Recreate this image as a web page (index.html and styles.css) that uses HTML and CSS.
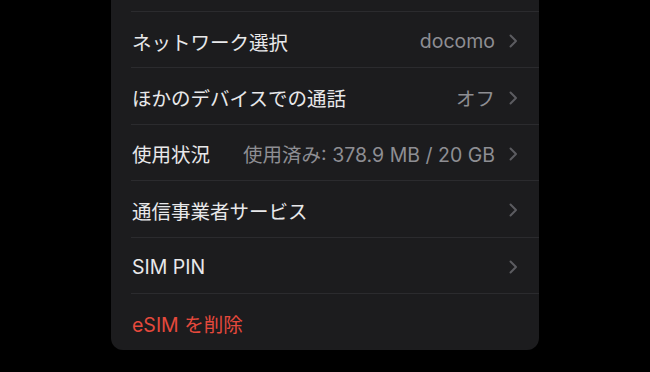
FILE: index.html
```html
<!DOCTYPE html>
<html lang="ja">
<head>
  <meta charset="UTF-8">
  <title>モバイル通信</title>
  <link rel="stylesheet" href="styles.css">
</head>
<body>
  <div class="card">
    <div class="row cut"></div>

    <div class="row">
      <span class="label">ネットワーク選択</span>
      <span class="value">docomo</span>
      <svg class="chev" viewBox="0 0 9 14"><polyline points="1.5,1.5 7,7 1.5,12.5"/></svg>
    </div>

    <div class="row">
      <span class="label">ほかのデバイスでの通話</span>
      <span class="value">オフ</span>
      <svg class="chev" viewBox="0 0 9 14"><polyline points="1.5,1.5 7,7 1.5,12.5"/></svg>
    </div>

    <div class="row">
      <span class="label">使用状況</span>
      <span class="value">使用済み: 378.9 MB / 20 GB</span>
      <svg class="chev" viewBox="0 0 9 14"><polyline points="1.5,1.5 7,7 1.5,12.5"/></svg>
    </div>

    <div class="row">
      <span class="label">通信事業者サービス</span>
      <svg class="chev" viewBox="0 0 9 14"><polyline points="1.5,1.5 7,7 1.5,12.5"/></svg>
    </div>

    <div class="row">
      <span class="label">SIM PIN</span>
      <svg class="chev" viewBox="0 0 9 14"><polyline points="1.5,1.5 7,7 1.5,12.5"/></svg>
    </div>

    <div class="row last">
      <span class="label danger">eSIM を削除</span>
    </div>
  </div>
</body>
</html>
```

FILE: styles.css
```css
html, body {
  margin: 0;
  background: #000;
  height: 100%;
  overflow: hidden;
}
body {
  font-family: Inter, "Noto Sans CJK JP", sans-serif;
  font-size: 19.5px;
  color: #e8e8ea;
}
.card {
  width: 428px;
  margin: -45px auto 0;
  background: #1c1c1e;
  border-radius: 0 0 12px 12px;
}
.row {
  position: relative;
  height: 56.4px;
  box-sizing: border-box;
  display: flex;
  align-items: center;
  padding: 2px 21px 0 21px;
}
.row::after {
  content: "";
  position: absolute;
  left: 20px;
  right: 0;
  bottom: 0;
  height: 1px;
  background: #2b2b2e;
}
.row.cut {
  height: 57px;
}
.row.last::after {
  display: none;
}
.label {
  flex: 1;
  white-space: nowrap;
}
.value {
  color: #8e8e93;
  margin-right: 14px;
  white-space: nowrap;
}
.danger {
  color: #e5493c;
}
.chev {
  width: 9px;
  height: 14px;
  fill: none;
  stroke: #5c5c60;
  stroke-width: 2;
  stroke-linecap: round;
  stroke-linejoin: round;
}
```
